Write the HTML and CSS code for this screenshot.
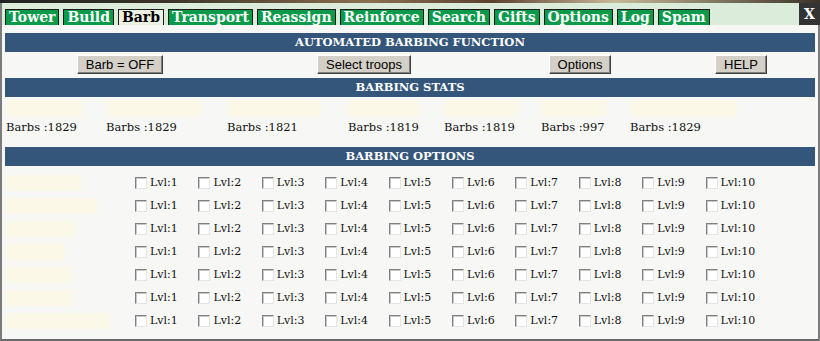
FILE: index.html
```html
<!DOCTYPE html>
<html lang="en">
<head>
  <meta charset="UTF-8" />
  <title>Barb</title>
  <link rel="stylesheet" href="styles.css">
</head>
<body>
  <div class="strip"></div>
  <div class="popup">
    <div class="tabbar">
      <div class="tabs">
        <span class="tab">Tower</span>
        <span class="tab">Build</span>
        <span class="tab active">Barb</span>
        <span class="tab">Transport</span>
        <span class="tab">Reassign</span>
        <span class="tab">Reinforce</span>
        <span class="tab">Search</span>
        <span class="tab">Gifts</span>
        <span class="tab">Options</span>
        <span class="tab">Log</span>
        <span class="tab">Spam</span>
      </div>
      <span class="close">X</span>
    </div>

    <div class="panel">
      <div class="head">AUTOMATED BARBING FUNCTION</div>
      <div class="buttons">
        <button class="btn">Barb = OFF</button>
        <button class="btn">Select troops</button>
        <button class="btn">Options</button>
        <button class="btn">HELP</button>
      </div>

      <div class="head">BARBING STATS</div>
      <div class="stats" id="stats"></div>

      <div class="head">BARBING OPTIONS</div>
      <div class="options" id="options"></div>
    </div>
  </div>

  <script>
    var stats = [
      { name: 77, count: 1829 },
      { name: 96, count: 1829 },
      { name: 94, count: 1821 },
      { name: 72, count: 1819 },
      { name: 75, count: 1819 },
      { name: 66, count: 997 },
      { name: 107, count: 1829 }
    ];
    var statsBox = document.getElementById("stats");
    stats.forEach(function (s) {
      var cell = document.createElement("div");
      cell.className = "stat";
      cell.innerHTML = '<span class="blur" style="width:' + s.name + 'px"></span>' +
        '<span class="count">Barbs :' + s.count + '</span>';
      statsBox.appendChild(cell);
    });

    var names = [76, 92, 70, 60, 68, 68, 105];
    var optBox = document.getElementById("options");
    names.forEach(function (w) {
      var name = document.createElement("div");
      name.className = "city";
      name.innerHTML = '<span class="blur" style="width:' + w + 'px"></span>';
      optBox.appendChild(name);
      for (var lvl = 1; lvl <= 10; lvl++) {
        var lab = document.createElement("label");
        lab.className = "lvl";
        lab.innerHTML = '<input type="checkbox"> Lvl:' + lvl;
        optBox.appendChild(lab);
      }
    });
  </script>
</body>
</html>
```

FILE: styles.css
```css
body {
  margin: 0;
  background-color: #f7f7f5;
  font-family: "DejaVu Serif", serif;
}
.strip {
  height: 3px;
  background: linear-gradient(to right, #222 0%, #3a3328 20%, #8a7050 45%, #5a4030 60%, #c8b89a 75%, #3a3328 100%);
}
.popup {
  border-left: 2px solid #7c7c7c;
  border-right: 2px solid #7c7c7c;
  border-bottom: 2px solid #6a6a6a;
  height: 336px;
}
.tabbar {
  display: flex;
  justify-content: space-between;
  background-color: #dcecdb;
  height: 22px;
}
.tabs {
  display: flex;
  align-items: flex-end;
  gap: 4px;
  padding-left: 3px;
}
.tab {
  background-color: #0a9a4a;
  color: #fff;
  font-weight: bold;
  font-size: 14px;
  line-height: 15px;
  padding: 0 3px;
  border: 1px solid #1b1b1b;
  border-bottom: none;
}
.tab.active {
  background-color: #eef0e2;
  color: #000;
}
.close {
  background-color: #333;
  color: #fff;
  font-weight: bold;
  font-size: 14px;
  width: 21px;
  margin-right: -2px;
  text-align: center;
  line-height: 22px;
}
.panel {
  padding: 8px 3px 0 3px;
}
.head {
  background-color: #34567a;
  color: #fff;
  font-weight: bold;
  font-size: 11.5px;
  height: 19px;
  line-height: 19px;
  text-align: center;
}
.buttons {
  display: grid;
  grid-template-columns: 230px 258px 174px 1fr;
  justify-items: center;
  padding: 3px 0 4px;
}
.btn {
  font-family: "Liberation Sans", Arial, sans-serif;
  font-size: 13px;
  height: 19px;
  padding: 0 8px;
  background-color: #d4d0c8;
  color: #000;
  border: 1px solid;
  border-color: #fff #404040 #404040 #fff;
  box-shadow: inset -1px -1px 0 #808080;
}
.stats {
  display: grid;
  grid-template-columns: 100px 121px 121px 96px 97px 89px 1fr;
  height: 50px;
  padding-left: 1px;
  box-sizing: border-box;
}
.stat {
  display: flex;
  flex-direction: column;
  align-items: flex-start;
  padding-top: 3px;
}
.blur {
  display: block;
  height: 16px;
  background-color: #fbf8e8;
  border-radius: 3px;
}
.count {
  font-size: 11.5px;
  color: #111;
  margin-top: 4px;
}
.options {
  display: grid;
  grid-template-columns: 130px repeat(10, 63.4px);
  grid-auto-rows: 23px;
  padding-top: 5px;
}
.city {
  display: flex;
  align-items: center;
}
.lvl {
  display: flex;
  align-items: center;
  gap: 3px;
  font-size: 11px;
  color: #111;
}
.lvl input {
  appearance: none;
  margin: 0;
  width: 12px;
  height: 12px;
  background-color: #fff;
  border: 1px solid;
  border-color: #808080 #e4e4e4 #e4e4e4 #808080;
  box-shadow: inset 1px 1px 0 #c8c8c8;
}
```
